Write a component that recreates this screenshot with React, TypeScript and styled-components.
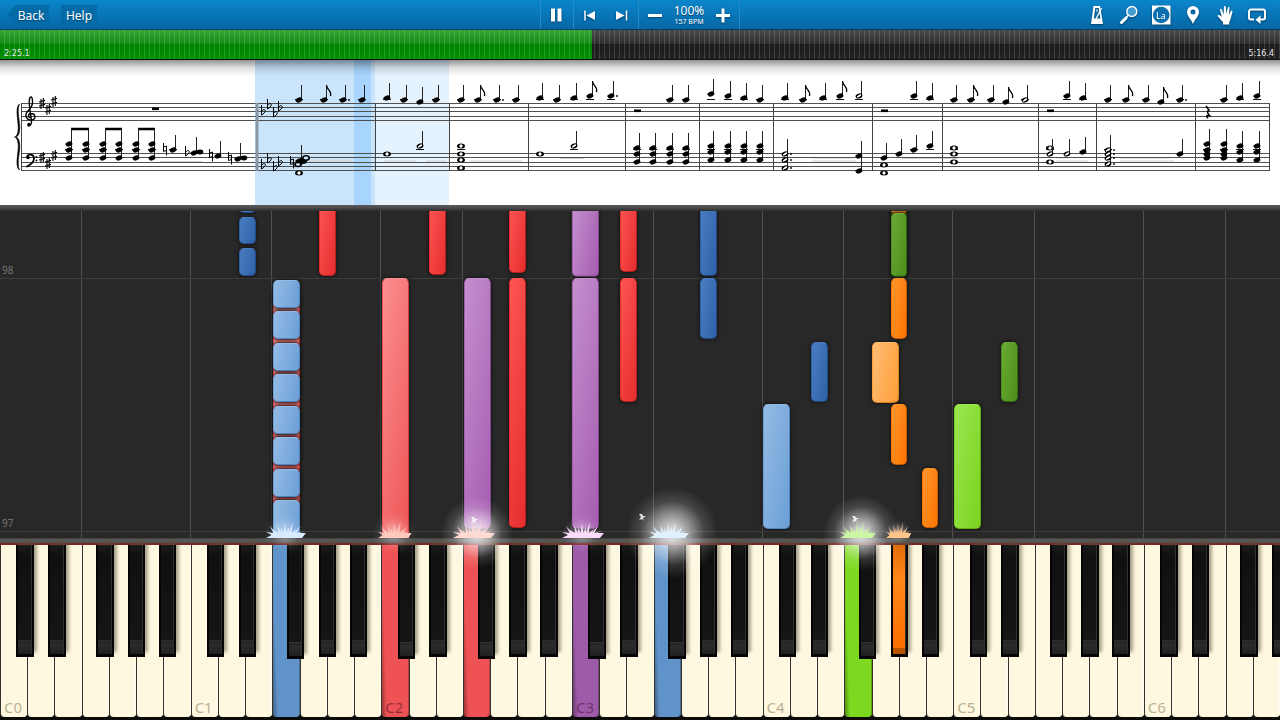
import React from "react";
import styled, { createGlobalStyle, css } from "styled-components";

const GlobalStyle = createGlobalStyle`
  * { box-sizing: border-box; }
  body { margin: 0; background: #282828; font-family: "Noto Sans", "Open Sans", sans-serif; }
  button { font: inherit; color: inherit; border: 0; padding: 0; margin: 0; background: none; cursor: pointer; }
`;

/* ---------- palette ---------- */
type Tone = "sky" | "navy" | "coral" | "red" | "purple" | "green" | "lime" | "orange" | "amber";

const noteFill: Record<Tone, [string, string, string]> = {
  sky: ["#94bbe4", "#6c9fd6", "#4f86c0"],
  navy: ["#4a7cc0", "#2e62a8", "#234c86"],
  coral: ["#fb8f8f", "#ee5455", "#c83c3e"],
  red: ["#fb5552", "#e62d2d", "#b81f1f"],
  purple: ["#c48fce", "#a55db0", "#84458f"],
  green: ["#69a934", "#4c8f1a", "#366c10"],
  lime: ["#9be550", "#7bd41f", "#60ad12"],
  orange: ["#ff952e", "#fb7500", "#cc5c00"],
  amber: ["#ffbd75", "#ff9f38", "#d98023"],
};

const keyFill: Record<string, string> = {
  sky: "#6093c9",
  coral: "#ee5254",
  purple: "#9e5ba9",
  lime: "#7dd920",
  orange: "#fb7a06",
};

/* ---------- shell ---------- */
const Page = styled.main`
  display: flex;
  flex-direction: column;
  min-width: 960px;
  height: 100vh;
  min-height: 600px;
  overflow: hidden;
`;

const Toolbar = styled.header`
  display: grid;
  grid-template-columns: 1fr auto 1fr;
  flex: none;
  height: 30px;
  color: #fff;
  background: linear-gradient(#0a86cb, #0667a5);
  border-bottom: 1px solid #063f66;
`;

const Group = styled.div<{ $end?: boolean }>`
  display: flex;
  align-items: center;
  gap: ${(p) => (p.$end ? 0 : 12)}px;
  justify-content: ${(p) => (p.$end ? "flex-end" : "flex-start")};
  padding: ${(p) => (p.$end ? "0 7px 0 0" : "0 0 0 7px")};
`;

const TextButton = styled.button<{ $back?: boolean }>`
  height: 20px;
  width: ${(p) => (p.$back ? 42 : 36)}px;
  padding-left: ${(p) => (p.$back ? 6 : 0)}px;
  font-size: 12px;
  line-height: 21px;
  background: #046ba7;
  text-shadow: 0 1px 1px #04426b;
  ${(p) =>
    p.$back &&
    css`
      clip-path: polygon(9px 0, 100% 0, 100% 100%, 9px 100%, 0 50%);
    `}
`;

const Transport = styled.div`
  display: flex;
`;

const Section = styled.div`
  display: flex;
  align-items: center;
  border-left: 1px solid #2589c4;
  &:last-child { border-right: 1px solid #2589c4; }
`;

const IconButton = styled.button`
  display: grid;
  place-items: center;
  width: 32px;
  height: 29px;
  filter: drop-shadow(0 1px 1px #04426b);
`;

const Tempo = styled.div`
  width: 36px;
  padding-top: 1px;
  text-align: center;
  text-shadow: 0 1px 1px #04426b;
`;
const Percent = styled.div`
  font-size: 12px;
  line-height: 12px;
`;
const Bpm = styled.div`
  font-size: 7px;
  line-height: 9px;
`;

/* ---------- song position ---------- */
const Timeline = styled.div`
  flex: none;
  height: 30px;
  border-bottom: 1px solid #111;
  background: linear-gradient(#484848, #2e2e2e 48%, #1b1b1b 50%, #232323);
  position: relative;
`;

const Played = styled.div`
  width: 46.25%;
  height: 100%;
  background: linear-gradient(#36a336, #128f14 48%, #008300 50%, #008f00);
`;

const Times = styled.div`
  position: absolute;
  inset: 0;
  display: flex;
  justify-content: space-between;
  align-items: flex-end;
  padding: 0 6px 1px 4px;
  color: #e4e4e4;
  font: 8px/9px "DejaVu Sans", sans-serif;
  background: repeating-linear-gradient(90deg, transparent 0 4px, rgba(255, 255, 255, 0.14) 4px 5px);
`;

/* ---------- score ---------- */
const Score = styled.section`
  position: relative;
  flex: none;
  height: 145px;
  background: #fff;
  overflow: hidden;
  &::after {
    content: "";
    position: absolute;
    inset: 0 0 auto;
    height: 16px;
    background: linear-gradient(rgba(0, 0, 0, 0.42), rgba(0, 0, 0, 0.12) 50%, transparent);
  }
  svg { display: block; width: 100%; height: 100%; }
`;

const Ledge = styled.div`
  flex: none;
  height: 6px;
  background: linear-gradient(#5b5b5b, #4a4a4a 50%, #2c2c2c);
`;

/* ---------- falling notes ---------- */
const Roll = styled.section`
  position: relative;
  flex: 1;
  background: #282828;
`;

const OctaveLine = styled.i`
  position: absolute;
  top: 0;
  bottom: 0;
  width: 1px;
  margin-left: -1px;
  background: #505050;
`;

const BarLine = styled.div`
  position: absolute;
  left: 0;
  right: 0;
  height: 14px;
  padding-left: 2px;
  border-bottom: 1px solid #3d3d3d;
  color: #757575;
  font-size: 10px;
  line-height: 11px;
`;

const NoteClip = styled.div`
  position: absolute;
  inset: 0;
  overflow: hidden;
`;

const Note = styled.div<{ $tone: Tone; $black: boolean; $open: boolean }>`
  position: absolute;
  width: ${(p) => (p.$black ? 1.32 : 2.11)}%;
  border: 1px solid ${(p) => noteFill[p.$tone][2]};
  border-top-color: ${(p) => noteFill[p.$tone][0]};
  border-left-color: ${(p) => noteFill[p.$tone][1]};
  border-radius: ${(p) => (p.$open ? "0 0 5px 5px" : "5px")};
  background: linear-gradient(100deg, ${(p) => noteFill[p.$tone][0]}, ${(p) => noteFill[p.$tone][1]});
  box-shadow: 0 0 3px 1px #171717;
`;

/* ---------- keyboard ---------- */
const Rail = styled.div`
  flex: none;
  height: 7px;
  background: linear-gradient(#3c3c3c, #5b5d5f 40%, #4c4e50);
  border-bottom: 2px solid #7b2723;
`;

const Keyboard = styled.section`
  position: relative;
  display: flex;
  flex: none;
  height: 175px;
  background: #0c0b08;
`;

const KeySlot = styled.div`
  position: relative;
  flex: 1;
  padding-bottom: 3px;
`;

const WhiteKey = styled.button<{ $tone?: string }>`
  display: flex;
  align-items: flex-end;
  width: 100%;
  height: 100%;
  padding: 0 0 1px 3px;
  border-left: 1px solid #35332c;
  border-radius: 0 0 4px 4px;
  font-size: 15px;
  line-height: 17px;
  color: ${(p) => (p.$tone ? "rgba(60, 10, 30, 0.5)" : "#bbb294")};
  background: ${(p) =>
    p.$tone
      ? `linear-gradient(88deg, rgba(0,0,0,0.35), transparent 16%), ${keyFill[p.$tone]}`
      : "#fef8e0"};
  box-shadow: inset -1px 0 0 ${(p) => (p.$tone ? "rgba(0,0,0,.25)" : "#fffdf2")};
`;

const BlackKey = styled.button<{ $left: number; $tone?: string; $low?: boolean }>`
  position: absolute;
  z-index: 2;
  top: 0;
  left: ${(p) => p.$left}%;
  width: 64%;
  height: ${(p) => (p.$low ? 114 : 112)}px;
  border: 2px solid #050505;
  border-top: 0;
  border-bottom-width: 3px;
  background: ${(p) =>
    p.$tone
      ? "linear-gradient(#e06b08, #ff8718 30%, #fa6f00 94%, #b95300 95%)"
      : "linear-gradient(#1b1b1b, #101010 10%, #151515 87%, #3a3a3a 88%, #1e1e1e 89%, #2c2c2c 91%, #202020)"};
  box-shadow: 3px -5px 3px rgba(90, 80, 60, 0.5), inset -1px 0 0 #303030;
`;

/* ---------- sparks where a note meets its key ---------- */
const Impact = styled.svg`
  position: absolute;
  z-index: 4;
  width: 120px;
  height: 120px;
  margin-left: -60px;
  bottom: -60px;
  overflow: visible;
  pointer-events: none;
`;

/* ---------- data ---------- */
const WHITE = 47;
const ROLL_TOP = 211;
const ROLL_SIZE = 327;
const LABELS = ["C", "D", "E", "F", "G", "A", "B"];
const BLACK_LEFT: Record<string, number> = { C: 60, D: 77, F: 54, G: 70, A: 84 };
const PRESSED: Record<number, string> = { 10: "sky", 14: "coral", 17: "coral", 21: "purple", 24: "sky", 31: "lime" };

/* [white key index, is the sharp above it, top, bottom, colour] */
type NoteRow = [number, boolean, number, number, Tone];
const NOTES: NoteRow[] = [
  [8, true, 205, 213, "navy"],
  [8, true, 217, 244, "navy"],
  [8, true, 248, 276, "navy"],
  [11, true, 205, 276, "red"],
  [10, false, 290, 538, "coral"],
  ...[280, 311, 343, 374, 406, 437, 469].map((y): NoteRow => [10, false, y, y + 28, "sky"]),
  [10, false, 500, 542, "sky"],
  [14, false, 278, 542, "coral"],
  [15, true, 205, 275, "red"],
  [17, false, 278, 529, "purple"],
  [18, true, 205, 273, "red"],
  [18, true, 278, 528, "red"],
  [21, false, 205, 277, "purple"],
  [21, false, 278, 529, "purple"],
  [22, true, 205, 272, "red"],
  [22, true, 278, 402, "red"],
  [25, true, 205, 276, "navy"],
  [25, true, 278, 339, "navy"],
  [28, false, 404, 529, "sky"],
  [29, true, 342, 402, "navy"],
  [32, true, 205, 277, "green"],
  [32, true, 205, 214, "orange"],
  [32, true, 213, 277, "green"],
  [32, true, 278, 339, "orange"],
  [32, false, 342, 403, "amber"],
  [32, true, 404, 465, "orange"],
  [33, true, 468, 528, "orange"],
  [35, false, 404, 529, "lime"],
  [36, true, 342, 402, "green"],
];

const IMPACTS: { x: number; color: string; glow: number; w: number }[] = [
  { x: 285, color: "#d9ecff", glow: 20, w: 19 },
  { x: 394, color: "#ffc9bd", glow: 22, w: 16 },
  { x: 473, color: "#ffd9d2", glow: 36, w: 20 },
  { x: 582, color: "#fbdcfd", glow: 20, w: 20 },
  { x: 668, color: "#dff1ff", glow: 46, w: 19 },
  { x: 857, color: "#cdf6a4", glow: 38, w: 17 },
  { x: 898, color: "#ffc68c", glow: 14, w: 12 },
];

const noteLeft = (i: number, sharp: boolean) =>
  ((i + (sharp ? BLACK_LEFT[LABELS[i % 7]] / 100 : 0.02)) / WHITE) * 100;

const pct = (y: number) => ((y - ROLL_TOP) / ROLL_SIZE) * 100;

/* ---------- score engraving ---------- */
type Kind = "q" | "e" | "h" | "w";
/* [x, head heights, kind, stem top, dotted] */
type Chord = [number, number[], Kind, number?, boolean?];

const TREBLE: Chord[] = [
  [299, [100], "q"], [324, [100], "e"], [343, [100], "q", undefined, true], [362, [100], "q"],
  [387, [98], "q"], [404, [100], "q"], [420, [102], "q"], [436, [100], "q"],
  [461, [100], "q"], [478, [100], "e"], [497, [100], "q", undefined, true], [516, [100], "q"],
  [540, [98], "q"], [557, [100], "q"], [574, [98], "q"], [590, [96], "e"], [611, [96], "q", undefined, true],
  [670, [100], "q"], [686, [100], "q"],
  [711, [94], "q"], [728, [96], "q"], [744, [98], "q"], [760, [100], "q"],
  [785, [98], "q"], [803, [100], "e"], [823, [98], "q"], [840, [96], "e"], [859, [96], "h"],
  [914, [96], "q"], [930, [98], "q"], [954, [100], "q"],
  [971, [100], "e"], [991, [100], "q"], [1006, [102], "e"], [1025, [100], "h"],
  [1067, [96], "q"], [1083, [98], "q"],
  [1108, [100], "q"], [1126, [100], "e"], [1146, [100], "q"], [1161, [102], "e"], [1180, [100], "q", undefined, true],
  [1224, [100], "q"], [1240, [98], "q"], [1257, [96], "q"],
];

const BASS: Chord[] = [
  ...[69, 86, 103, 119, 136, 152].map((x): Chord => [x, [144, 150, 158], "q", 129]),
  [173, [150], "q"], [194, [153], "q", 137], [218, [156], "q", 141], [238, [159], "q", 143],
  [299, [161, 164], "q", 145], [299, [173], "w"],
  [387, [154], "w"], [420, [146], "h"], [461, [146, 154, 160, 168], "w"],
  [540, [154], "w"], [574, [146], "h"],
  ...[637, 653, 670, 686].map((x): Chord => [x, [148, 154, 162], "q", 133]),
  ...[711, 728, 744, 760].map((x): Chord => [x, [146, 152, 160], "q", 131]),
  [785, [154, 160, 168], "h", 139, true], [859, [156, 171], "q", 141],
  [884, [158], "q"], [884, [165, 173], "w"], [899, [154], "q"], [914, [150], "q"], [930, [146], "q"],
  [954, [148, 154, 162], "w"],
  [1050, [148, 162], "w"], [1050, [154], "h"], [1067, [154], "h"], [1083, [152], "q"],
  [1108, [150, 154, 158, 164], "h", 135, true], [1180, [154], "q"],
  ...[1207, 1224].map((x): Chord => [x, [144, 150, 154, 158], "q", 129]),
  ...[1240, 1257].map((x): Chord => [x, [146, 152, 160], "q", 131]),
];

const BARS = [21, 375, 449, 528, 625, 699, 773, 872, 942, 1038, 1096, 1195, 1269];
const STAFF = [103, 107, 111, 116, 120, 153, 157, 162, 166, 170];

function ChordMark({ chord, ledger }: { chord: Chord; ledger: number }) {
  const [x, heads, kind, top, dotted] = chord;
  const low = Math.max(...heads);
  const stemTop = top ?? Math.min(...heads) - 15;
  return (
    <g>
      {heads.some((h) => h <= ledger + 1) && (
        <path d={`M${x - 4} ${ledger}.5h8`} stroke="#111" />
      )}
      {kind !== "w" && <path d={`M${x + 2.5} ${low}V${stemTop}`} stroke="#222" />}
      {heads.map((y) =>
        kind === "q" || kind === "e" ? (
          <g key={y}>
            <path d={`M${x - 4} ${y}h7.5`} stroke="#111" strokeWidth=".8" />
            <ellipse cx={x} cy={y} rx="3.3" ry="2.4" transform={`rotate(-22 ${x} ${y})`} />
          </g>
        ) : (
          <g key={y}>
            <ellipse cx={x} cy={y} rx={kind === "w" ? 4 : 3.5} ry="2.5" transform={kind === "w" ? undefined : `rotate(-22 ${x} ${y})`} />
            <ellipse
              cx={x}
              cy={y}
              rx={kind === "w" ? 1.6 : 2.5}
              ry={kind === "w" ? 1.7 : 1}
              fill="#fff"
              transform={`rotate(${kind === "w" ? 40 : -32} ${x} ${y})`}
            />
          </g>
        ),
      )}
      {dotted && heads.map((y) => <circle key={y} cx={x + 6} cy={y} r="0.9" />)}
      {kind === "e" && (
        <path
          d={`M${x + 2.5} ${stemTop}c0 5 5.5 5 4 11`}
          fill="none"
          stroke="#000"
          strokeWidth="1.3"
        />
      )}
    </g>
  );
}

const Sharp = ({ x, y }: { x: number; y: number }) => (
  <path
    d={`M${x - 1} ${y - 4}v10M${x + 1.3} ${y - 5}v10M${x - 3} ${y - 1}l6 -1.6M${x - 3} ${y + 3}l6 -1.6`}
    stroke="#000"
    strokeWidth="1.1"
    fill="none"
  />
);

const Flat = ({ x, y }: { x: number; y: number }) => (
  <path
    d={`M${x - 1.5} ${y - 6}v10c2 -1 4 -3 3.8 -4.5c-.5 -1.5 -2.5 -1 -3.5 .5`}
    stroke="#000"
    strokeWidth="1"
    fill="none"
  />
);

const Natural = ({ x, y }: { x: number; y: number }) => (
  <path
    d={`M${x - 1.5} ${y - 6}v8.5l3 -1v5M${x + 1.5} ${y + 2}v-5l-3 1`}
    stroke="#000"
    strokeWidth="1"
    fill="none"
  />
);

function ScoreSheet() {
  return (
    <Score aria-label="Sheet music">
      <svg viewBox="0 60 1280 145" preserveAspectRatio="none">
        <rect x="255" y="60" width="120" height="145" fill="#c9e4fb" />
        <rect x="354" y="60" width="17" height="145" fill="#a7d5fd" />
        <rect x="375" y="60" width="74" height="145" fill="#e4f2fe" />
        <path
          d="M160 161.500h42M290 161h62M384 161h32M426 161h20M470 161h52M560 158.500h24M812 158h40M812 161h44M902 158.500h56M1056 158h12M1056 161h32M1120 158h50M1120 161h54"
          stroke="#d0d0d0"
        />
        {STAFF.map((y) => (
          <path key={y} d={`M21 ${y}.5H1270`} stroke="#505050" />
        ))}
        {BARS.map((x) => (
          <path key={x} d={`M${x}.5 103V171`} stroke="#444" />
        ))}
        <path d="M257 103V171" stroke="#8b98a3" strokeWidth="3" />
        <path
          d="M19.500 104C14 108 19.500 124 18 131C17.500 135 16 136.500 14.500 137C16 137.500 17.500 139 18 143C19.500 150 14 166 19.500 170C16 163 21 150 19.500 143C19 139 17.500 137.500 16 137C17.500 136.500 19 135 19.500 131C21 124 16 111 19.500 104Z"
          stroke="#000"
          strokeWidth=".6"
        />
        <g fill="none" stroke="#000" strokeLinecap="round">
          <path
            strokeWidth="1.4"
            d="M31 117.500c-3 .5 -3.500 -3.500 0 -4c4.500 0 5.500 5.500 1 6.500c-5 1 -8 -4.500 -4.500 -8.500c3 -3.500 5.500 -5.500 5 -11c-.2 -4 -2 -5 -3 -1.500c-1 4 .5 12 1.800 20c.6 4 -.2 7 -3 7"
          />
          <path strokeWidth="1.8" d="M27 156.500c1 -3 7 -2.500 7 2c0 3.500 -3 6 -7 8" />
        </g>
        <circle cx="29" cy="124.500" r="1.800" />
        <circle cx="28" cy="157.500" r="1.800" />
        <circle cx="36.500" cy="157" r=".9" />
        <circle cx="36.500" cy="160.500" r=".9" />
        {[[42, 103], [48, 109], [54, 101], [42, 157], [48, 163], [54, 155]].map(([x, y]) => (
          <Sharp key={`${x}-${y}`} x={x} y={y} />
        ))}
        {[[263, 111], [269, 105], [275, 113], [280, 107], [263, 165], [269, 159], [275, 167], [280, 162], [187, 152]].map(
          ([x, y]) => <Flat key={`${x}-${y}`} x={x} y={y} />,
        )}
        {[[165, 149], [211, 155], [230, 158], [292, 162]].map(([x, y]) => (
          <Natural key={x} x={x} y={y} />
        ))}
        {[[155, 109], [637, 111], [884, 111], [1050, 111]].map(([x, y]) => (
          <rect key={x} x={x - 3} y={y - 1.5} width="7" height="2.6" />
        ))}
        <path
          d="M1206 106l3 4c-2 1.500 -2 2.500 .5 5.500c-3 -1 -3.500 1 -1.500 2.500"
          fill="none"
          stroke="#000"
          strokeWidth="1.6"
        />
        <path d="M71 129h18M105 129h17M138 129h17" stroke="#000" strokeWidth="2.5" />
        {TREBLE.map((c) => (
          <ChordMark key={c[0]} chord={c} ledger={99} />
        ))}
        {BASS.map((c, i) => (
          <ChordMark key={i} chord={c} ledger={149} />
        ))}
        <ellipse cx="200" cy="152" rx="3.300" ry="2.400" />
        <ellipse cx="244" cy="158" rx="3.300" ry="2.400" />
        <ellipse cx="303" cy="161" rx="4" ry="3" />
        <ellipse cx="306" cy="158" rx="3.200" ry="2.200" fill="#c9e4fb" stroke="#000" strokeWidth="1.600" />
        <ellipse cx="298" cy="164.500" rx="3" ry="2" fill="#c9e4fb" stroke="#000" strokeWidth="1.600" />
      </svg>
    </Score>
  );
}

/* ---------- toolbar icons ---------- */
const Glyph = ({ children }: { children: React.ReactNode }) => (
  <svg width="22" height="22" viewBox="0 0 22 22" fill="none" stroke="#fff" aria-hidden="true">
    {children}
  </svg>
);

const icons: { name: string; art: React.ReactNode }[] = [
  {
    name: "Metronome",
    art: (
      <>
        <path d="M7.500 2h6.500l3 18H5zM9.300 4L7.800 14.500h6.600L12.700 4z" fill="#fff" fillRule="evenodd" stroke="none" />
        <path d="M10 15l5.500-11" strokeWidth="1.400" />
        <path d="M11 5v3" strokeWidth="1" />
      </>
    ),
  },
  {
    name: "Zoom",
    art: (
      <>
        <circle cx="13.800" cy="7.500" r="5" strokeWidth="1.500" fill="#3f9bd0" />
        <path d="M10 11.500L7.500 14" strokeWidth="1.600" />
        <path d="M8 14L3.500 18.500" strokeWidth="3" strokeLinecap="round" />
      </>
    ),
  },
  {
    name: "Note names",
    art: (
      <>
        <rect x="2" y="1.500" width="18.500" height="19" fill="#fff" stroke="none" />
        <circle cx="11.200" cy="11" r="8.300" fill="#0b6fae" stroke="none" />
        <text x="11" y="14.500" textAnchor="middle" fontSize="9" fill="#fff" stroke="none" fontFamily="Noto Sans">La</text>
      </>
    ),
  },
  {
    name: "Bookmark",
    art: (
      <path
        fill="#fff"
        stroke="none"
        fillRule="evenodd"
        d="M11 2a6 6 0 0 1 6 6c0 4-4 7-6 12c-2-5-6-8-6-12a6 6 0 0 1 6-6zm0 3.500a2.500 2.500 0 1 0 0 5a2.500 2.500 0 0 0 0-5z"
      />
    ),
  },
  {
    name: "Hands",
    art: (
      <path
        fill="#fff"
        stroke="none"
        d="M9 20.500v-2.500c-2.500-2-3.500-4-5.500-6c.5-1.500 2-1 4.300.8L6 6c0-1.500 1.500-1.500 1.900-.2L9.700 10.500L9.800 3c.2-1.500 1.800-1.500 2 0l.5 6.800l1.500-6c.5-1.300 2-1 1.700.5L14.800 11l2-4c.9-1.200 2-.4 1.600.9c-1.100 3.600-1.400 7.600-3.200 10.100v2.500z"
      />
    ),
  },
  {
    name: "Loop",
    art: (
      <>
        <path d="M8 15.500H5a2 2 0 0 1-2-2V7.500a2 2 0 0 1 2-2h12a2 2 0 0 1 2 2v6a2 2 0 0 1-2 2h-4" strokeWidth="2" />
        <path d="M14.500 11.500v8.500L9.500 15.700z" fill="#fff" stroke="none" />
      </>
    ),
  },
];

/* uneven blades, so that a burst does not look like a comb */
const BLADES = [6, 12, 8, 13, 10, 15, 11, 16, 9, 12, 7];

function Burst({ x, color, glow, w }: (typeof IMPACTS)[number]) {
  const id = `glow-${x}`;
  const blades = BLADES.map((reach, i) => {
    const t = (i + 0.5) / BLADES.length - 0.5;
    const base = t * w * 1.5;
    return `L${base + t * w * 0.7} ${-reach}L${base + w * 0.07} ${-5}`;
  }).join("");
  const strong = glow > 30;
  return (
    <Impact viewBox="-60 -60 120 120" style={{ left: `${(x / 1280) * 100}%` }}>
      <defs>
        <radialGradient id={id}>
          <stop offset="0" stopColor="#fff" stopOpacity={strong ? 0.9 : 0.5} />
          <stop offset=".35" stopColor="#fff" stopOpacity={strong ? 0.55 : 0.25} />
          <stop offset=".7" stopColor="#fff" stopOpacity={strong ? 0.14 : 0.06} />
          <stop offset="1" stopColor="#fff" stopOpacity="0" />
        </radialGradient>
      </defs>
      <circle cx={strong ? 4 : 0} cy={-5} r={glow} fill={`url(#${id})`} />
      <path d={`M${-w} 0L${-w * 0.7} -3${blades}L${w * 1.1} -5L${w * 0.9} 0z`} fill={color} />
    </Impact>
  );
}

const Star = ({ x, y }: { x: number; y: number }) => (
  <Impact viewBox="-60 -60 120 120" style={{ left: `${(x / 1280) * 100}%` }}>
    <path transform={`translate(0 ${y - 538})`} d="M0-3l1 2l3 0l-3 2l1 3l-2-2l-3 1l2-3l-2-3z" fill="#fff" opacity=".85" />
  </Impact>
);

function RollNotes() {
  return (
    <NoteClip>
      {NOTES.map(([key, sharp, top, bottom, tone], i) => (
        <Note
          key={i}
          $tone={tone}
          $black={sharp}
          $open={top < ROLL_TOP}
          style={{
            left: `${noteLeft(key, sharp)}%`,
            top: `${pct(top)}%`,
            height: `${pct(bottom) - pct(top)}%`,
          }}
        />
      ))}
    </NoteClip>
  );
}

export default function App() {
  return (
    <>
      <GlobalStyle />
      <Page>
        <Toolbar>
          <Group>
            <TextButton $back>Back</TextButton>
            <TextButton>Help</TextButton>
          </Group>
          <Transport>
            <Section>
              <IconButton aria-label="Pause">
                <Glyph><path d="M5 4.500h4v13H5zM11.500 4.500h4v13h-4z" fill="#fff" stroke="none" /></Glyph>
              </IconButton>
            </Section>
            <Section>
              <IconButton aria-label="Previous bar">
                <Glyph>
                  <path d="M16 7v9L7.500 11.500z" fill="#fff" stroke="none" />
                  <path d="M6 6.500v10" strokeWidth="1.500" />
                </Glyph>
              </IconButton>
              <IconButton aria-label="Next bar">
                <Glyph>
                  <path d="M5 7v9l8.500-4.500z" fill="#fff" stroke="none" />
                  <path d="M15.500 6.500v10" strokeWidth="1.500" />
                </Glyph>
              </IconButton>
            </Section>
            <Section>
              <IconButton aria-label="Slower">
                <Glyph><path d="M4 11.500h14" strokeWidth="3" /></Glyph>
              </IconButton>
              <Tempo>
                <Percent>100%</Percent>
                <Bpm>157 BPM</Bpm>
              </Tempo>
              <IconButton aria-label="Faster">
                <Glyph><path d="M4 11.500h14M11 4.500v14" strokeWidth="3" /></Glyph>
              </IconButton>
            </Section>
          </Transport>
          <Group $end>
            {icons.map((icon) => (
              <IconButton key={icon.name} aria-label={icon.name}>
                <Glyph>{icon.art}</Glyph>
              </IconButton>
            ))}
          </Group>
        </Toolbar>

        <Timeline>
          <Played />
          <Times>
            <span>2:25.1</span>
            <span>5:16.4</span>
          </Times>
        </Timeline>

        <ScoreSheet />
        <Ledge />

        <Roll>
          {Array.from({ length: WHITE }, (_, i) => i)
            .filter((i) => i > 0 && (i % 7 === 0 || i % 7 === 3))
            .map((i) => (
              <OctaveLine key={i} style={{ left: `${(i / WHITE) * 100}%` }} />
            ))}
          <BarLine style={{ top: `${pct(265)}%` }}>98</BarLine>
          <BarLine style={{ top: `${pct(518)}%` }}>97</BarLine>
          <RollNotes />
          {IMPACTS.map((b) => (
            <Burst key={b.x} {...b} />
          ))}
          <Star x={642} y={517} />
          <Star x={855} y={519} />
          <Star x={474} y={520} />
        </Roll>

        <Rail />
        <Keyboard>
          {Array.from({ length: WHITE }, (_, i) => {
            const name = LABELS[i % 7];
            const octave = Math.floor(i / 7);
            return (
              <KeySlot key={i}>
                <WhiteKey $tone={PRESSED[i]} aria-label={`${name}${octave}`}>
                  {name === "C" && `C${octave}`}
                </WhiteKey>
                {name in BLACK_LEFT && (
                  <BlackKey
                    $left={BLACK_LEFT[name]}
                    $tone={i === 32 ? "orange" : undefined}
                    $low={i in PRESSED}
                    aria-label={`${name} sharp ${octave}`}
                  />
                )}
              </KeySlot>
            );
          })}
        </Keyboard>
      </Page>
    </>
  );
}
